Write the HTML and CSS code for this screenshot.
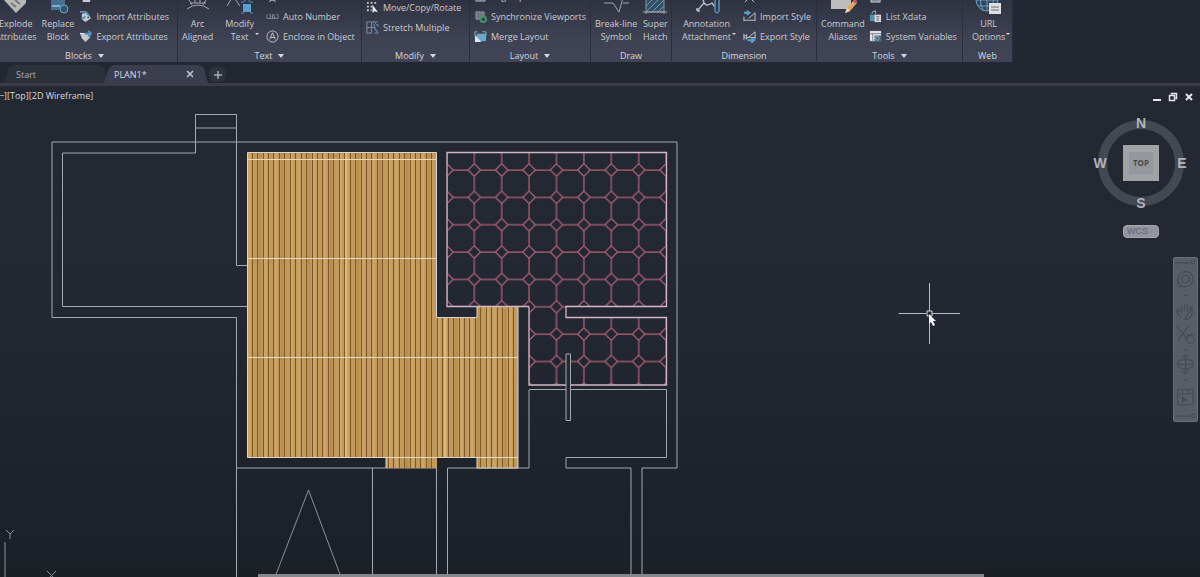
FILE: index.html
```
<!DOCTYPE html>
<html lang="en">
<head>
<meta charset="utf-8">
<title>PLAN1</title>
<link rel="stylesheet" href="styles.css">
</head>
<body>
<div class="app">
  <header class="ribbon">
    <section class="panel blocks">
      <div class="panel-body">
        <button class="big first"><svg class="ico-big" viewBox="0 0 28 28"><path d="M2 14h22v3L14 27z" fill="#b9b8b4"/><path d="M9 17l5 4M13 14l5 4" stroke="#77787c" stroke-width="2"/></svg><span>Explode<br>Attributes</span></button>
        <button class="big"><svg class="ico-big" viewBox="0 0 28 28"><path d="M7 12h14v12H7z" fill="#45708f"/><path d="M8 20h8" stroke="#79b0d4" stroke-width="2"/><circle cx="20" cy="23" r="4" fill="#31536d" stroke="#6ca5ca"/></svg><span>Replace<br>Block</span></button>
        <div class="rows">
          <button class="row"><svg class="ico" viewBox="0 0 14 14"><path d="M4 8h8v5H4z" fill="#c8cad0"/></svg></button>
          <button class="row"><svg class="ico" viewBox="0 0 14 14"><path d="M3 4l6-1 4 6-6 4-4-3z" fill="#c5c8cf"/><path d="M1 2h6l4 4M7 7l-4 3" stroke="#5592bc" stroke-width="2" fill="none"/><circle cx="10" cy="8" r="1" fill="#414555"/></svg>Import Attributes</button>
          <button class="row"><svg class="ico" viewBox="0 0 14 14"><path d="M1 3l10 1 1 4-5 5-4-4z" fill="#c5c8cf"/><path d="M6 4h7M10 1l3 3-3 3" stroke="#5592bc" stroke-width="2" fill="none"/><path d="M1 4h5" stroke="#eee"/></svg>Export Attributes</button>
        </div>
      </div>
      <button class="panel-title">Blocks<i class="caret"></i></button>
    </section>
    <section class="panel text">
      <div class="panel-body">
        <button class="big"><svg class="ico-big" viewBox="0 0 28 28"><path d="M3 23q11-8 22 0M5 14l3 5M11 12v5M16 12v5M22 14l-3 5M6 17h16" stroke="#a3a7b0" fill="none"/></svg><span>Arc<br>Aligned</span></button>
        <button class="big drop"><svg class="ico-big" viewBox="0 0 28 28"><path d="M1 20L7 10l7 10" stroke="#a3a7b0" fill="none"/><path d="M17 18h8v8h-8z" fill="#5ba0cc"/><path d="M15 16h3M24 16h3M15 27h3M24 27h3M19 12v4M23 12v4" stroke="#5592bc"/></svg><span>Modify<br>Text</span></button>
        <div class="rows">
          <button class="row"><svg class="ico" viewBox="0 0 14 14"><path d="M4 13l3-8 3 8M5 11h4" stroke="#c8cad0" fill="none"/></svg></button>
          <button class="row"><svg class="ico" viewBox="0 0 14 14"><path d="M1 5v4M3 5h2v4H3M7 5h2v4H7zM11 5h2v4h-2M1 9h12" stroke="#858996" fill="none"/></svg>Auto Number</button>
          <button class="row"><svg class="ico" viewBox="0 0 14 14"><circle cx="7" cy="7" r="6" stroke="#c8cad0" fill="none"/><path d="M4 10l3-7 3 7M5 8h4" stroke="#c8cad0" fill="none"/></svg>Enclose in Object</button>
        </div>
      </div>
      <button class="panel-title">Text<i class="caret"></i></button>
    </section>
    <section class="panel modify">
      <div class="panel-body">
        <div class="rows">
          <button class="row"><svg class="ico" viewBox="0 0 14 14"><path d="M1 2h12M1 6h7M1 10h5" stroke="#c8cad0" stroke-width="2" stroke-dasharray="2 2"/><path d="M7 4v9l2-2 4 1z" fill="#e6e8ec"/></svg>Move/Copy/Rotate</button>
          <button class="row"><svg class="ico" viewBox="0 0 14 14"><path d="M1 1h5v12H1zM1 7h5" stroke="#7c99b2" fill="none"/><path d="M8 1h5M8 7h2l-2-4M9 13h4L9 8M13 3v2M6 1h3l4 5M6 7h3l4 6" stroke="#6492b5" fill="none"/></svg>Stretch Multiple</button>
        </div>
      </div>
      <button class="panel-title">Modify<i class="caret"></i></button>
    </section>
    <section class="panel layout">
      <div class="panel-body">
        <div class="rows">
          <button class="row"><svg class="ico" viewBox="0 0 14 14"><path d="M2 4h10v8H2z" fill="#737784" stroke="#a4a8b2"/></svg>Align Space</button>
          <button class="row"><svg class="ico" viewBox="0 0 14 14"><path d="M2 2h9v8H2z" fill="#737784" stroke="#a4a8b2" stroke-dasharray="2 1"/><circle cx="10" cy="10" r="3" stroke="#46966c" stroke-width="2" fill="#3b4050"/></svg>Synchronize Viewports</button>
          <button class="row"><svg class="ico" viewBox="0 0 14 14"><path d="M3 4h10v8H3z" fill="#68a9ce"/><path d="M1 2v4M1 2h3M9 2h4M13 2v4" stroke="#7fb3d2"/><path d="M1 5v8h7z" fill="#e2e5ea"/></svg>Merge Layout</button>
        </div>
      </div>
      <button class="panel-title">Layout<i class="caret"></i></button>
    </section>
    <section class="panel draw">
      <div class="panel-body">
        <button class="big"><svg class="ico-big" viewBox="0 0 28 28"><path d="M2 17h9l6 9 4-14M21 17h6" stroke="#a3a7b0" fill="none"/></svg><span>Break-line<br>Symbol</span></button>
        <button class="big"><svg class="ico-big" viewBox="0 0 28 28"><path d="M5 8h18v18H5z" fill="#345064" stroke="#8b929e"/><path d="M5 20l12-12M5 26L23 8M11 26l12-12M17 26l6-6" stroke="#669bb8"/><path d="M2 26h24M5 26v3M23 26v3" stroke="#a3a7b0"/></svg><span>Super<br>Hatch</span></button>
      </div>
      <button class="panel-title">Draw</button>
    </section>
    <section class="panel dimension">
      <div class="panel-body">
        <button class="big drop"><svg class="ico-big" viewBox="0 0 28 28"><path d="M4 25l7-8M4 25v-3M4 25h3M10 14q2 8 9 3l3 4" stroke="#b4b8c0" stroke-width="1.500" fill="none"/><path d="M22 12v13q2 4 4 0V12" stroke="#5592bc" stroke-width="1.500" fill="none"/></svg><span>Annotation<br>Attachment</span></button>
        <div class="rows">
          <button class="row"><svg class="ico" viewBox="0 0 14 14"><path d="M2 13l5-5 5 5" stroke="#c8cad0" fill="none"/></svg></button>
          <button class="row"><svg class="ico" viewBox="0 0 14 14"><path d="M1 3h5M4 1l3 2-3 2" stroke="#5ba0cc" stroke-width="2" fill="none"/><path d="M1 7v5M13 3v9M1 11h12M6 9l7-6" stroke="#c8cad0" fill="none"/></svg>Import Style</button>
          <button class="row"><svg class="ico" viewBox="0 0 14 14"><path d="M1 4v7M1 7l3-2v5zM4 8h9M13 2v8M6 8l7-6" stroke="#c8cad0" fill="none"/><path d="M5 11h6M9 9l3 2-3 3" stroke="#5ba0cc" stroke-width="2" fill="none"/></svg>Export Style</button>
        </div>
      </div>
      <button class="panel-title">Dimension</button>
    </section>
    <section class="panel tools">
      <div class="panel-body">
        <button class="big"><svg class="ico-big" viewBox="0 0 28 28"><path d="M2 8h20v15H2z" fill="#bdbdbf"/><path d="M16 27l2-5 7-8 3 3-7 8z" fill="#e0a765"/><path d="M25 14l3 3" stroke="#bd5f61" stroke-width="3"/><path d="M16 27l2-5 3 3z" fill="#e7d7c0"/></svg><span>Command<br>Aliases</span></button>
        <div class="rows">
          <button class="row"><svg class="ico" viewBox="0 0 14 14"><path d="M2 6h10v7H2z" fill="#858996" stroke="#c8cad0"/></svg></button>
          <button class="row"><svg class="ico" viewBox="0 0 14 14"><path d="M1 5h6v7H1z" fill="#5592a8"/><path d="M3 4q0-3 4-3v3" stroke="#9bbccc" fill="none"/><path d="M6 5h7v8H6z" fill="#d2d5da"/><path d="M8 7h3M8 9h3M8 11h3" stroke="#70757e"/></svg>List Xdata</button>
          <button class="row"><svg class="ico" viewBox="0 0 14 14"><path d="M1 1h12v11H1z" fill="#e1e3e6"/><path d="M1 4h12M4 4v9" stroke="#7a7f8b"/><path d="M6 6h7v7H6z" fill="#4b6377"/><circle cx="9" cy="9" r="2" stroke="#91adbf" fill="none"/></svg>System Variables</button>
        </div>
      </div>
      <button class="panel-title">Tools<i class="caret"></i></button>
    </section>
    <section class="panel web">
      <div class="panel-body">
        <button class="big drop"><svg class="ico-big" viewBox="0 0 28 28"><circle cx="12" cy="14" r="11" fill="#31475f" stroke="#6c9dbd"/><path d="M12 3v22M1 14h22M3 20h18M7 4q-4 10 1 20M17 4q3 9 0 20" stroke="#6c9dbd" fill="none"/><path d="M14 17h12v11H14z" fill="#dedfe2"/><path d="M16 21h8M16 24h8" stroke="#686c76"/></svg><span>URL<br>Options</span></button>
      </div>
      <button class="panel-title">Web</button>
    </section>
  </header>

  <nav class="tabs">
    <button class="tab">Start</button>
    <div class="tab active"><button class="tab-name">PLAN1*</button><button class="tab-close" aria-label="Close"><svg viewBox="0 0 8 8"><path d="M1 1l6 6M7 1L1 7" stroke="#c3c6cf" stroke-width="1.500"/></svg></button></div>
    <button class="tab-add" aria-label="New tab"><svg viewBox="0 0 8 8"><path d="M4 0v8M0 4h8" stroke="#a9adb6" stroke-width="1.500"/></svg></button>
  </nav>

  <main class="canvas">
    <svg class="drawing" viewBox="0 86 1200 491" preserveAspectRatio="xMinYMin slice">
      <defs>
        <pattern id="wood" x="247" y="152" width="49" height="310" patternUnits="userSpaceOnUse">
          <path d="M0 0h49v310H0z" fill="#c2985b"/>
          <path d="M2.500 0v310M18.500 0v310M29 0v310M45 0v310" stroke="#cea569" stroke-width="2.500"/>
          <path d="M13 0v310M35 0v310" stroke="#ba8e51" stroke-width="3"/>
          <path d="M5.500 0v310M10.500 0v310M16.500 0v310M21.500 0v310M26.500 0v310M32.500 0v310M37.500 0v310M43.500 0v310M48.500 0v310" stroke="#7e5928" stroke-width="1"/>
        </pattern>
        <pattern id="tile" x="433.200" y="156.300" width="27.400" height="27.350" patternUnits="userSpaceOnUse">
          <path d="M13.700 7.400l6.300 6.300-6.300 6.300-6.300-6.300zM13.700 0v7.400M13.700 20v7.400M0 13.700h7.400M20 13.700h7.400" fill="none" stroke="#b5637a" stroke-width="1.200"/>
        </pattern>
      </defs>
      <path class="wall" d="M62.500 306.500V153H195.500V114.500H236.500V265.500H247.500M195.500 128H236.500M52 142H677V468H642V577M52 142V317.500H236.500V577M62.500 306.500H247.500M236.500 468H436.500M372.500 468V577M436.500 457.500V577M447.500 577V468H529V390M529 389.500H666.500V457.500H566V468H631V577"/>
      <path class="thin" d="M275 577L308.500 490 341 577"/>
      <path d="M247.500 152.500H437V317.500H477V306.500H518V468H477V457.500H437V468H386V457.500H247.500z" fill="url(#wood)"/>
      <path d="M346 152V457M445 318V457" stroke="#e6c48e" stroke-width="2" opacity=".7"/>
      <path d="M248 159.500H437M248 258.500H437M248 357.500H518M386 457.500H518" stroke="#e6d8bc"/>
      <path d="M247.500 457.500V152.500H436.500V317.500H477V306.500H518V468H477V457.500H436.500M247.500 457.500H386V468" fill="none" stroke="#d9d5cd"/>
      <path d="M447 152.500H666.500V306.500H566V317.500H666.500V385H529V306.500H447z" fill="url(#tile)"/>
      <path d="M529 306.500H447V152.500H666.500V306.500H566V317.500H666.500V385H529V306.500" fill="none" stroke="#d5b6c5" stroke-width="1.300"/>
      <path class="wall" fill="#252832" d="M566 354H570.500V420.500H566z"/>
      <path class="thin" d="M5 542V577M6 530l4 4 4-4M10 534v5M47 571l9 9M56 571l-9 9"/>
      <path d="M898.500 313.500H926M932 313.500H960M929.500 283V311M929.500 316V344" stroke="#b8bbc1"/>
      <path d="M927 311H932V316H927z" fill="none" stroke="#d6d8dc"/>
      <path d="M929 314v10l2-2 2 4 2-1-2-4h3z" fill="#f1f2f4"/>
    </svg>
    <div class="view-label"><button>[−]</button><button>[Top]</button><button>[2D Wireframe]</button></div>
    <div class="window-buttons">
      <button aria-label="Minimize"><svg viewBox="0 0 10 10"><path d="M1 8h8" stroke="#e5e7ea" stroke-width="2"/></svg></button>
      <button aria-label="Restore"><svg viewBox="0 0 10 10"><path d="M3.500 2.500V1.500H8.500V6.500H7.500M1.500 3.500H6.500V8.500H1.500z" fill="none" stroke="#e5e7ea" stroke-width="1.500"/></svg></button>
      <button aria-label="Close drawing"><svg viewBox="0 0 10 10"><path d="M2 2l6 6M8 2L2 8" stroke="#e5e7ea" stroke-width="2"/></svg></button>
    </div>
    <div class="compass">
      <div class="ring"></div>
      <button class="dir n">N</button><button class="dir w">W</button><button class="top-face"><span>TOP</span></button><button class="dir e">E</button><button class="dir s">S</button>
    </div>
    <button class="wcs"><span>WCS</span></button>
    <div class="navbar">
      <svg viewBox="0 0 24 170" fill="none" stroke="#464c56" stroke-width="1.200"><path d="M1 5h15M1 165h15"/><circle cx="20" cy="4" r="2"/><circle cx="20" cy="165" r="2"/><circle cx="12" cy="22" r="8"/><circle cx="12" cy="22" r="4"/><path d="M4 22v8h8M10 39h4M7 62c-3-4-5-7-3-8l4 3v-6M8 57v-7M11 56v-8M14 56v-8M17 57v-7M19 51v7q-2 7-8 6zM3 71l11 14M15 71L4 86M14 80h6M10 96h4M12 102v18M4 111h16M4 109q0-3 8-3t8 3v3q-2 4-8 4t-8-4zM9 104l3-3 3 3M9 118l3 3 3-3M10 127h4M4 137h16v16H4zM4 142h16M9 137v5M15 137v5"/><circle cx="17" cy="85" r="4"/><path d="M9 145v5l4-2z" fill="#464c56"/></svg>
    </div>
    <div class="scrollbar"></div>
  </main>
</div>
</body>
</html>
```
FILE: styles.css
```
* { box-sizing: border-box; }
body {
  margin: 0;
  background: #20242d;
  color: #c9ccd4;
  font: 9px/13px "Open Sans", "Noto Sans", sans-serif;
}
button {
  margin: 0;
  padding: 0;
  border: 0;
  background: none;
  color: inherit;
  font: inherit;
  white-space: nowrap;
}
svg { display: block; }
.app {
  display: flex;
  flex-direction: column;
  height: 100vh;
  overflow: hidden;
  background: #232731;
}
.ribbon {
  display: flex;
  flex: none;
  align-self: flex-start;
  height: 62px;
  overflow: hidden;
  background: linear-gradient(#2f3240, #3e4152 60%, #414456);
}
.panel {
  display: flex;
  flex-direction: column;
  justify-content: flex-end;
  align-items: center;
  flex: none;
  border-right: 1px solid #2c2f3b;
}
.panel-body {
  display: flex;
  align-items: flex-end;
  align-self: stretch;
  padding: 0 4px;
}
.panel-title {
  display: flex;
  align-items: center;
  gap: 6px;
  height: 15px;
  color: #d5d8de;
}
.caret {
  border: 3px solid transparent;
  border-top: 4px solid #d5d8de;
  border-bottom: 0;
}
.rows { display: flex; flex-direction: column; padding-bottom: 3px; }
.row {
  display: flex;
  align-items: center;
  gap: 4px;
  height: 20px;
}
.ico { width: 13px; height: 13px; flex: none; }
.big {
  display: flex;
  flex-direction: column;
  align-items: center;
  padding-bottom: 6px;
  position: relative;
}
.ico-big { width: 28px; height: 28px; margin-bottom: 3px; }
.drop::after {
  content: "";
  position: absolute;
  right: -5px;
  bottom: 14px;
  border: 2px solid transparent;
  border-top-color: #d5d8de;
  border-bottom: 0;
}
.blocks { width: 178px; }
.blocks .panel-body { justify-content: flex-end; gap: 5px; padding-right: 8px; }
.blocks .panel-title { margin-right: 8px; }
.text { width: 184px; }
.text .panel-body { gap: 12px; }
.modify { width: 108px; }
.modify .rows { padding-bottom: 12px; }
.layout { width: 121px; }
.draw { width: 81px; }
.draw .panel-body { gap: 4px; }
.dimension { width: 145px; }
.dimension .panel-body { padding-left: 10px; gap: 12px; }
.tools { width: 146px; }
.tools .panel-body { gap: 4px; }
.web { width: 50px; }
.web .panel-body { padding-left: 9px; }

.tabs {
  display: flex;
  align-items: flex-end;
  flex: none;
  height: 24px;
  padding-left: 4px;
  border-bottom: 3px solid #3a3d46;
}
.tab {
  height: 18px;
  width: 104px;
  padding: 0 12px;
  text-align: left;
  color: #a9adb6;
  background: #2c303b;
  clip-path: polygon(0 100%, 5px 3px, 9px 0, 96px 0, 100px 3px, 100% 100%);
}
.tab.active {
  display: flex;
  align-items: center;
  justify-content: space-between;
  margin-left: -4px;
  padding: 0 14px 0 10px;
  color: #d9dbe1;
  background: #3b3e4e;
}
.tab-close svg, .tab-add svg { width: 8px; height: 8px; }
.tab-add {
  display: grid;
  place-items: center;
  width: 17px;
  height: 15px;
  margin: 0 0 1px 1px;
  border-radius: 6px;
  background: #2e323c;
}

.canvas {
  position: relative;
  flex: 1;
  min-height: 0;
  overflow: hidden;
  background: linear-gradient(#232832, #222731 50%, #1b1f26);
}
.drawing { width: 100%; height: 100%; }
.wall { fill: none; stroke: #a4a9b1; }
path.wall[fill] { fill: #252832; }
.thin { fill: none; stroke: #8c9199; }
.view-label {
  position: absolute;
  top: 3px;
  left: -4px;
  display: flex;
  color: #d6d8dc;
}
.window-buttons {
  position: absolute;
  top: 6px;
  right: 6px;
  display: flex;
  gap: 6px;
}
.window-buttons svg { width: 10px; height: 10px; }
.compass {
  position: absolute;
  top: 29px;
  right: 10px;
  display: grid;
  grid-template: 16px 64px 16px / 16px 66px 16px;
  place-items: center;
  color: #b0b4bd;
  font: bold 14px/16px "Liberation Sans", sans-serif;
}
.ring {
  position: absolute;
  inset: 5px 6px;
  border: 9px solid #444852;
  border-radius: 50%;
}
.dir { position: relative; }
.n, .s { grid-column: 2; }
.w { grid-column: 1; }
.top-face {
  position: relative;
  display: grid;
  place-items: center;
  width: 36px;
  height: 36px;
  background: #a0a3a6;
  color: #464a50;
  font: bold 8px/22px "Open Sans", sans-serif;
}
.top-face span { width: 24px; background: #94979b; }
.wcs {
  position: absolute;
  top: 139px;
  right: 41px;
  width: 36px;
  height: 13px;
  padding-left: 3px;
  border: 1px solid #a6a8b2;
  border-radius: 4px;
  background: #9295a0;
  color: #62656f;
  font: 9px/11px "Liberation Sans", sans-serif;
  text-align: left;
}
.navbar {
  position: absolute;
  top: 171px;
  right: 2px;
  width: 25px;
  border: 1px solid #686d76;
  border-radius: 2px;
  background: #585d66;
}
.scrollbar {
  position: absolute;
  bottom: 0;
  left: 21.5%;
  right: 18%;
  height: 3px;
  background: #85878a;
}
```
